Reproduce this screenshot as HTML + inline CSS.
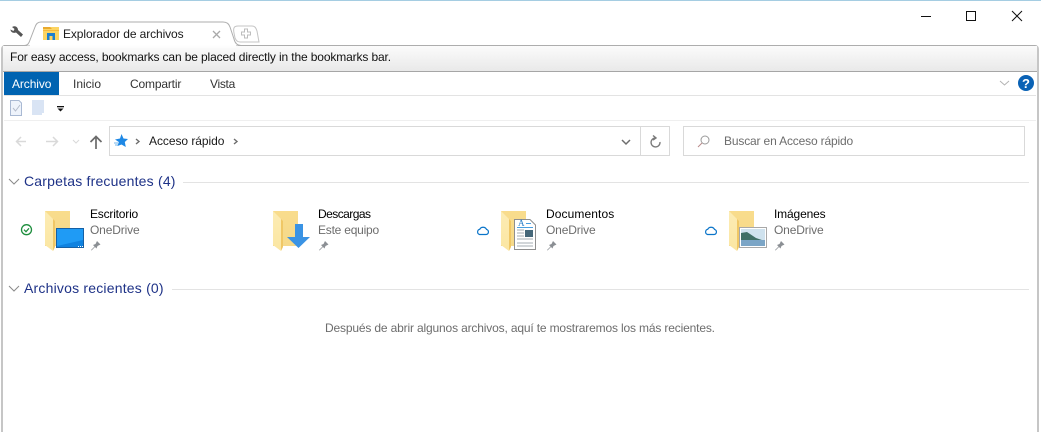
<!DOCTYPE html>
<html><head><meta charset="utf-8"><style>
html,body{margin:0;padding:0;background:#fff;width:1041px;height:432px;overflow:hidden}
body{position:relative;font-family:"Liberation Sans",sans-serif;font-size:12px;color:#1a1a1a}
#w{position:absolute;left:0;top:0;width:1041px;height:432px;overflow:hidden}
.t{position:absolute;white-space:nowrap;line-height:16px}
.b{position:absolute}
svg{position:absolute;overflow:visible}
.g{color:#6d6d6d}
.h{color:#1e3287;font-size:14px;line-height:18px}
</style></head><body><div id="w">
<div class="b" style="left:0;top:0;width:1041px;height:1px;background:#a5cde2"></div>

<!-- frame -->
<div class="b" style="left:1px;top:45px;width:1038px;height:387px;border:solid #c6c6c6;border-top-color:#adadad;border-width:1px 2px 0 2px;border-radius:4px 4px 0 0;box-sizing:border-box"></div>
<div class="b" style="left:3px;top:46px;width:1034px;height:25px;background:linear-gradient(#fbfbfb,#e9e9e9);border-bottom:1px solid #a6a6a6"></div>

<!-- tab -->
<svg style="left:0;top:0" width="260" height="50">
<path d="M234 33C233 28 234 26 238 26H252C255 26 256 28 257 31L259 42H240C237 42 236 40 235 38Z" fill="#fff" stroke="#c4c4c4"/>
<path d="M246 28.500V38.500M241 33.500H251" stroke="#bdbdbd" stroke-width="4"/>
<path d="M246 29.500V37.500M242 33.500H250" stroke="#fff" stroke-width="2"/>
<path d="M4 45.500H24C28 45.500 29 43 30 40L35 27C36 24 38 22 41 22H223C227 22 229 24 230 27L234 39C235 43 237 45.500 241 45.500" fill="#fff" stroke="#adadad"/>
<rect x="30" y="45" width="206" height="3" fill="url(#tabf)"/>
<linearGradient id="tabf" x1="0" y1="0" x2="0" y2="1"><stop offset="0" stop-color="#fff"/><stop offset="1" stop-color="#fbfbfb"/></linearGradient>
<path d="M213 31L220 38M220 31L213 38" stroke="#a9a9a9" stroke-width="1.300"/>
<path d="M10.500 29.500L13.500 31L14.500 29L12 27C15 25 18 27 18 30L23 34.500L21 37L16 32.500C13 33.500 10.500 32 10.500 29.500Z" fill="#555"/>
<rect x="43" y="27" width="16" height="13" fill="#fcd462"/><path d="M43 27H50L52 29H43Z" fill="#e9a92d"/>
<path d="M47 33H55V40H52.500V36H49.500V40H47Z" fill="#1d7fd0"/><rect x="43" y="30" width="16" height="1" fill="#f6b93c"/>
</svg>
<div class="t" style="left:63px;top:26px;letter-spacing:-.1px">Explorador de archivos</div>
<div class="t" style="left:10px;top:49px;letter-spacing:-.13px;color:#111">For easy access, bookmarks can be placed directly in the bookmarks bar.</div>

<!-- window buttons -->
<svg style="left:0;top:0" width="1041" height="40">
<path d="M921 16.500H931" stroke="#111"/>
<rect x="966.500" y="11.500" width="9" height="9" fill="none" stroke="#111"/>
<path d="M1012 11L1022 21M1022 11L1012 21" stroke="#111"/>
</svg>

<!-- ribbon -->
<div class="b" style="left:4px;top:72px;width:55px;height:23px;background:#0063b1"></div>
<div class="t" style="left:12px;top:76px;color:#fff;letter-spacing:-.1px">Archivo</div>
<div class="t" style="left:73px;top:76px;color:#333">Inicio</div>
<div class="t" style="left:130px;top:76px;color:#333;letter-spacing:-.17px">Compartir</div>
<div class="t" style="left:210px;top:76px;color:#333;letter-spacing:-.3px">Vista</div>
<div class="b" style="left:4px;top:95px;width:1032px;height:1px;background:#e3e3e3"></div>
<div class="b" style="left:4px;top:120px;width:1032px;height:1px;background:#efefef"></div>
<svg style="left:0;top:0" width="1041" height="160">
<path d="M1000 81L1004.500 85L1009 81" fill="none" stroke="#b3b3b3"/>
<circle cx="1026" cy="83" r="8" fill="#0a62b5"/>
<text x="1026" y="88" font-family="Liberation Sans" font-size="13" font-weight="bold" fill="#fff" text-anchor="middle">?</text>
<path d="M10.500 100.500H19L21.500 103V115.500H10.500Z" fill="#eef3fb" stroke="#a9b9d3"/>
<path d="M13 108L15.500 111L20 105" fill="none" stroke="#b4bccb"/>
<path d="M32 100H44V113H42V115H32Z" fill="#d9e4f4"/>
<rect x="57" y="106" width="7" height="1.300" fill="#111"/>
<path d="M57.500 108.500H63.500L60.500 111.500Z" fill="#111"/>
<path d="M26 141.500H17M21 137L16.500 141.500L21 146" fill="none" stroke="#d9d9d9" stroke-width="1.500"/>
<path d="M46 141.500H57M53 137L57.500 141.500L53 146" fill="none" stroke="#d9d9d9" stroke-width="1.500"/>
<path d="M73 140L76 143L79 140" fill="none" stroke="#d9d9d9"/>
<path d="M96 149V137M90.500 142L96 136.500L101.500 142" fill="none" stroke="#6b6b6b" stroke-width="1.700"/>
</svg>

<!-- address -->
<div class="b" style="left:109px;top:126px;width:561px;height:30px;box-sizing:border-box;border:1px solid #d9d9d9"></div>
<div class="b" style="left:640px;top:126px;width:1px;height:30px;background:#d9d9d9"></div>
<div class="b" style="left:683px;top:126px;width:342px;height:30px;box-sizing:border-box;border:1px solid #d9d9d9"></div>
<svg style="left:0;top:0" width="1041" height="160">
<path d="M121.500 134L123.500 138.500L128 139L124.800 142L125.800 147L121.500 144.500L117.500 146L118.800 142L115 139.500L120 138.500Z" fill="#1e88e5"/>
<path d="M114 143H118M115 145H118" stroke="#6fb4ee"/>
<path d="M136 139L139 141.500L136 144" fill="none" stroke="#6d6d6d" stroke-width="1.400"/>
<path d="M234 139L237 141.500L234 144" fill="none" stroke="#6d6d6d" stroke-width="1.400"/>
<path d="M622 140L626 144L630 140" fill="none" stroke="#6d6d6d" stroke-width="1.500"/>
<path d="M660 141.500A4.500 4.500 0 1 1 655 137.500M653 135L656 137.500L653 139.500" fill="none" stroke="#7a7a7a" stroke-width="1.400" transform="translate(0,.5)"/>
<circle cx="705" cy="140" r="4" fill="none" stroke="#9a9a9a"/>
<path d="M702 143L698 147" stroke="#b98a8a"/>
</svg>
<div class="t" style="left:149px;top:133px;letter-spacing:-.05px">Acceso rápido</div>
<div class="t g" style="left:724px;top:133px;letter-spacing:-.16px">Buscar en Acceso rápido</div>

<!-- section headers -->
<svg style="left:0;top:0" width="1041" height="300">
<path d="M9 179L14 184L19 179" fill="none" stroke="#8a8a8a"/>
<path d="M9 286L14 291L19 286" fill="none" stroke="#8a8a8a"/>
<path d="M183 182.500H1029M172 289.500H1029" stroke="#e3e3e3"/>
</svg>
<div class="t h" style="left:24px;top:172px;letter-spacing:.2px">Carpetas frecuentes (4)</div>
<div class="t h" style="left:24px;top:279px;letter-spacing:.2px">Archivos recientes (0)</div>

<!-- folders -->
<svg style="left:0;top:0" width="1041" height="270">
<defs>
<linearGradient id="f" x1="0" y1="0" x2="0" y2="1"><stop offset="0" stop-color="#f9dc8c"/><stop offset="1" stop-color="#f5d98a"/></linearGradient>
<linearGradient id="f2" x1="0" y1="0" x2="0" y2="1"><stop offset="0" stop-color="#fcecb4"/><stop offset="1" stop-color="#fbe6a2"/></linearGradient>
<g id="fo"><rect x="0" y="0" width="25" height="35" fill="url(#f)"/><path d="M0 0L8 8V40L0 34Z" fill="url(#f2)"/><path d="M8 8V40L10 36V10Z" fill="#f0c765"/></g>
<path id="pin" d="M0.500 10L4 6.500L2.500 5L5 4L6.500 1L10 4.500L7 6L6 8.500L4.500 7L1 10.500Z" fill="#8b8f94"/>
</defs>
<use href="#fo" x="45" y="211"/><use href="#fo" x="273" y="211"/><use href="#fo" x="501" y="211"/><use href="#fo" x="729" y="211"/>

<rect x="56.500" y="228.500" width="27" height="19" fill="#1f9bf5" stroke="#1560a5"/>
<path d="M57 246L83 240V247H57Z" fill="#0f82e0"/>
<path d="M78 246.500H83" stroke="#fff" stroke-dasharray="1 1"/>

<path d="M295 224H303V237H310L298.500 248L287 237H295Z" fill="#3a93e4"/>

<path d="M514.500 219.500H530L535.500 225V249.500H514.500Z" fill="#fff" stroke="#8f8f8f"/>
<path d="M517 230H524M517 233H524M517 236H524M517 239H533M517 243H533M517 246H533" stroke="#a6adb3"/>
<path d="M517 227.500H533M526 223.500H531" stroke="#4a9fe0"/><text x="518" y="226" font-size="9" font-family="Liberation Serif" fill="#2a7fc9">A</text>
<rect x="525" y="230" width="8" height="7" fill="#46687a"/>

<rect x="739.500" y="227.500" width="27" height="20" fill="#fff" stroke="#a8a8a8"/>
<rect x="741" y="229" width="24" height="17" fill="#cfe2ee"/>
<path d="M741 233L747 232L756 238L765 241V246H741Z" fill="#3f6f66"/><rect x="741" y="240" width="24" height="6" fill="#7ba5c6"/>

<use href="#pin" x="90.500" y="240"/><use href="#pin" x="318.500" y="240"/><use href="#pin" x="546.500" y="240"/><use href="#pin" x="774.500" y="240"/>

<circle cx="26.500" cy="229.700" r="5" fill="none" stroke="#1e8e3e" stroke-width="1.300"/>
<path d="M24 229.700L26 231.700L29 228.300" fill="none" stroke="#1e8e3e" stroke-width="1.200"/>
<g id="cl"><path d="M479.500 234.500H486A2.600 2.600 0 0 0 486.500 229.400A3.800 3.800 0 0 0 479.700 229.300A2.700 2.700 0 0 0 479.500 234.500Z" fill="none" stroke="#0a74c9" stroke-width="1.200"/></g>
<use href="#cl" x="228" y="0"/>
</svg>
<div class="t" style="left:90px;top:206px;color:#000;letter-spacing:-.2px">Escritorio</div>
<div class="t g" style="left:90px;top:222px;letter-spacing:-.15px">OneDrive</div>
<div class="t" style="left:318px;top:206px;color:#000;letter-spacing:-.55px">Descargas</div>
<div class="t g" style="left:318px;top:222px;letter-spacing:-.22px">Este equipo</div>
<div class="t" style="left:546px;top:206px;color:#000;letter-spacing:.1px">Documentos</div>
<div class="t g" style="left:546px;top:222px;letter-spacing:-.15px">OneDrive</div>
<div class="t" style="left:774px;top:206px;color:#000;letter-spacing:-.15px">Imágenes</div>
<div class="t g" style="left:774px;top:222px;letter-spacing:-.15px">OneDrive</div>

<div class="t g" style="left:325px;top:320px;letter-spacing:-.16px">Después de abrir algunos archivos, aquí te mostraremos los más recientes.</div>
</div></body></html>
